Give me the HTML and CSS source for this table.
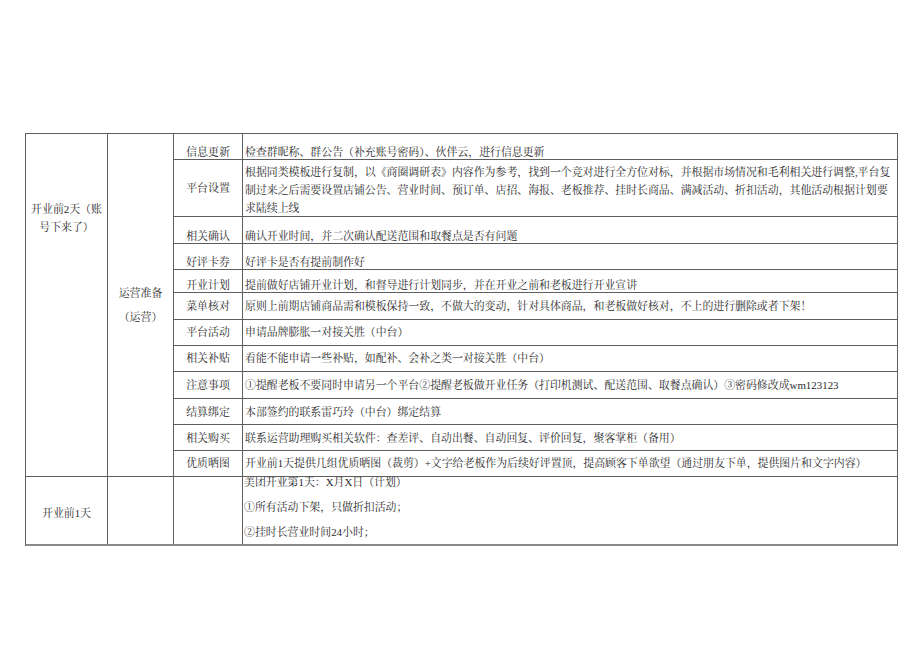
FILE: index.html
```html
<!DOCTYPE html>
<html lang="zh-CN">
<head>
<meta charset="utf-8">
<title>开业准备</title>
<link rel="stylesheet" href="styles.css">
</head>
<body>
<div class="page">
  <div class="sheet">
    <div class="cell stage stage-main">开业前2天（账号下来了）</div>
    <div class="cell phase"><p>运营准备</p><p>（运营）</p></div>

    <div class="cell label r1">信息更新</div>
    <div class="cell text r1">检查群昵称、群公告（补充账号密码）、伙伴云，进行信息更新</div>

    <div class="cell label r2">平台设置</div>
    <div class="cell text multi">根据同类模板进行复制，以《商圈调研表》内容作为参考，找到一个竞对进行全方位对标，并根据市场情况和毛利相关进行调整,平台复<br>制过来之后需要设置店铺公告、营业时间、预订单、店招、海报、老板推荐、挂时长商品、满减活动、折扣活动，其他活动根据计划要<br>求陆续上线</div>

    <div class="cell label r3">相关确认</div>
    <div class="cell text r3">确认开业时间，并二次确认配送范围和取餐点是否有问题</div>

    <div class="cell label r4">好评卡券</div>
    <div class="cell text r4">好评卡是否有提前制作好</div>

    <div class="cell label r5">开业计划</div>
    <div class="cell text r5">提前做好店铺开业计划，和督导进行计划同步，并在开业之前和老板进行开业宣讲</div>

    <div class="cell label r6">菜单核对</div>
    <div class="cell text r6">原则上前期店铺商品需和模板保持一致，不做大的变动，针对具体商品，和老板做好核对，不上的进行删除或者下架！</div>

    <div class="cell label">平台活动</div>
    <div class="cell text">申请品牌膨胀一对接关胜（中台）</div>

    <div class="cell label">相关补贴</div>
    <div class="cell text">看能不能申请一些补贴，如配补、会补之类一对接关胜（中台）</div>

    <div class="cell label r6">注意事项</div>
    <div class="cell text r6">①提醒老板不要同时申请另一个平台②提醒老板做开业任务（打印机测试、配送范围、取餐点确认）③密码修改成wm123123</div>

    <div class="cell label r6">结算绑定</div>
    <div class="cell text r6">本部签约的联系雷巧玲（中台）绑定结算</div>

    <div class="cell label r6">相关购买</div>
    <div class="cell text r6">联系运营助理购买相关软件：查差评、自动出餐、自动回复、评价回复，聚客掌柜（备用）</div>

    <div class="cell label">优质晒图</div>
    <div class="cell text">开业前1天提供几组优质晒图（裁剪）+文字给老板作为后续好评置顶，提高顾客下单欲望（通过朋友下单，提供图片和文字内容）</div>

    <div class="cell stage stage-day">开业前1天</div>
    <div class="cell blank"></div>
    <div class="cell blank"></div>
    <div class="cell text plan">
      <p>美团开业第1天：X月X日（计划）</p>
      <p>①所有活动下架，只做折扣活动；</p>
      <p>②挂时长营业时间24小时；</p>
    </div>
  </div>
</div>
</body>
</html>
```

FILE: styles.css
```css
html, body {
  margin: 0;
  background: #ffffff;
}

body {
  font-family: "Liberation Serif", "Noto Serif CJK SC", "Noto Sans CJK SC", serif;
  font-size: 10.9px;
  color: #2a2a2a;
}

.page {
  padding: 133px 0 0 25px;
}

.sheet {
  display: grid;
  width: 871px;
  grid-template-columns: 81px 65px 68px 654px;
  grid-template-rows: 25px 56px 26px 25px 22px 26px 25px 25px 26px 25px 25px 25px 67px;
  gap: 1px;
  background: #5e5e5e;
  border: 1px solid #5e5e5e;
  border-bottom: 2px solid #8a8a8a;
}

.cell {
  background: #ffffff;
  line-height: 16px;
  padding-top: 4px;
  white-space: nowrap;
  overflow: hidden;
}

.cell p {
  margin: 0;
}

.stage {
  grid-column: 1;
  text-align: center;
  white-space: normal;
}

.stage-main {
  grid-row: 1 / 13;
  line-height: 18px;
  padding: 66px 4px 0;
}

.stage-day {
  grid-row: 13;
  padding-top: 28px;
}

.phase {
  grid-column: 2;
  grid-row: 1 / 13;
  text-align: center;
  line-height: 24px;
  padding-top: 147px;
}

.label {
  grid-column: 3;
  text-align: center;
}

.text {
  grid-column: 4;
  padding-left: 2px;
}

.multi {
  line-height: 18px;
  padding-top: 3px;
}

.r1 { padding-top: 10px; }
.r2 { padding-top: 20px; }
.r3 { padding-top: 11px; }
.r4 { padding-top: 10px; }
.r5 { padding-top: 7px; }
.r6 { padding-top: 5px; }

.plan {
  padding-top: 0;
  padding-left: 1px;
}

.plan p {
  line-height: 11px;
}

.plan p + p {
  margin-top: 14px;
}
```
